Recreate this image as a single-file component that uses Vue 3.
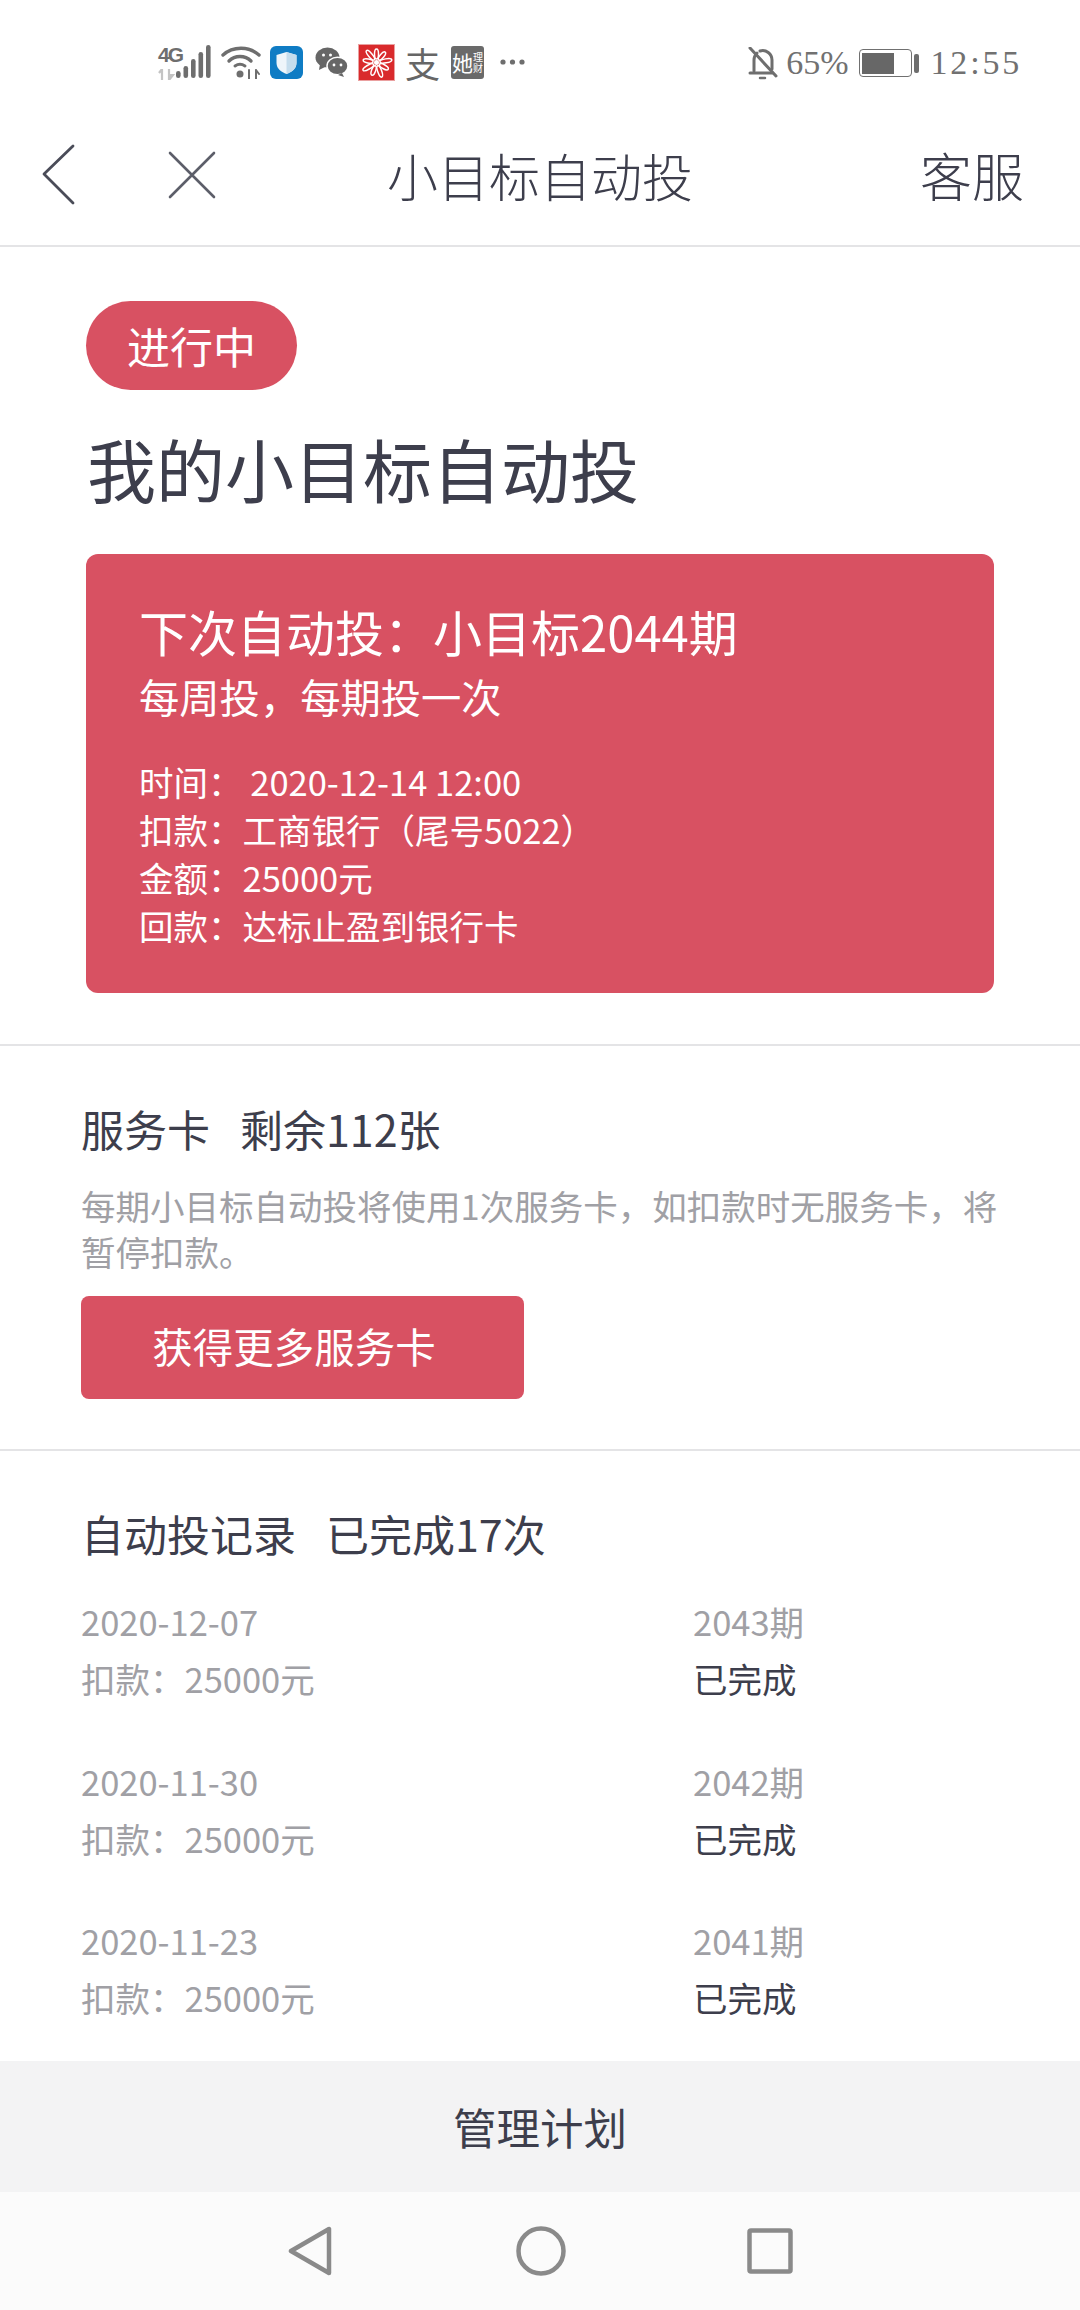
<template>
  <div class="page">
    <div class="status-bar">
      <div class="status-left">
        <div class="net">
          <span class="net-4g">4G</span>
          <svg class="net-arrows" width="17" height="11" viewBox="0 0 17 11"><path d="M4 0v11M1 4l3-4M11 0v11M11 11l4-5h-4z" stroke="#c4c4c4" stroke-width="2.200" fill="#c4c4c4"/></svg>
        </div>
        <svg class="signal" width="35" height="34" viewBox="0 0 35 34" fill="#6e6e6e">
          <rect x="0" y="26" width="4.600" height="7" rx="2.300"/>
          <rect x="7.500" y="21" width="4.600" height="12" rx="2.300"/>
          <rect x="15" y="14" width="4.600" height="19" rx="2.300"/>
          <rect x="22.500" y="7" width="4.600" height="26" rx="2.300"/>
          <rect x="30" y="0" width="4.600" height="33" rx="2.300"/>
        </svg>
        <svg class="wifi" width="40" height="33" viewBox="0 0 40 33" fill="none" stroke="#6e6e6e" stroke-width="3.400" stroke-linecap="round">
          <path d="M2 9C12 0 28 0 38 9"/>
          <path d="M8 15C14 9 24 9 30 15"/>
          <path d="M14 20C17 18 21 18 24 20" stroke-width="3"/>
          <circle cx="19" cy="28" r="3.500" fill="#6e6e6e" stroke="none"/>
          <path d="M28 24v9M35 24v9M35 24l3 4" stroke-width="2"/>
        </svg>
        <svg class="shield" width="33" height="33" viewBox="0 0 33 33">
          <rect width="33" height="33" rx="6" fill="#0f7cc4"/>
          <path d="M16.500 6l10 3v8c0 6-5 9-10 11C11.500 26 6.500 23 6.500 17V9z" fill="#eef5fa"/>
          <path d="M16.500 6l10 3v8c0 6-5 9-10 11z" fill="#c5dded"/>
        </svg>
        <svg class="wechat" width="33" height="30" viewBox="0 0 33 30" fill="#666">
          <ellipse cx="12.500" cy="10.500" rx="12" ry="10"/>
          <path d="M5 17l-1 6 6-3z"/>
          <ellipse cx="22.500" cy="19" rx="10.500" ry="8.800" stroke="#fff" stroke-width="1.500"/>
          <path d="M27 26l2 4-6-2z"/>
          <circle cx="8.500" cy="8" r="1.500" fill="#fff"/>
          <circle cx="15.500" cy="8" r="1.500" fill="#fff"/>
          <circle cx="19" cy="18" r="1.400" fill="#fff"/>
          <circle cx="26" cy="18" r="1.400" fill="#fff"/>
        </svg>
        <svg class="flower" width="37" height="37" viewBox="0 0 37 37">
          <rect x="0.500" y="0.500" width="36" height="36" fill="#d92a2c" stroke="#eaa0a0"/>
          <g fill="none" stroke="#fff" stroke-width="1.500" stroke-linecap="round">
            <ellipse cx="18.500" cy="10" rx="2" ry="5"/>
            <ellipse cx="18.500" cy="10" rx="2" ry="5" transform="rotate(40 18.500 18.500)"/>
            <ellipse cx="18.500" cy="9" rx="2" ry="6" transform="rotate(80 18.500 18.500)"/>
            <ellipse cx="18.500" cy="10" rx="2" ry="5" transform="rotate(120 18.500 18.500)"/>
            <ellipse cx="18.500" cy="9" rx="2" ry="6" transform="rotate(160 18.500 18.500)"/>
            <ellipse cx="18.500" cy="10" rx="2" ry="5" transform="rotate(200 18.500 18.500)"/>
            <ellipse cx="18.500" cy="9" rx="2" ry="6" transform="rotate(240 18.500 18.500)"/>
            <ellipse cx="18.500" cy="10" rx="2" ry="5" transform="rotate(280 18.500 18.500)"/>
            <ellipse cx="18.500" cy="9" rx="2" ry="6" transform="rotate(320 18.500 18.500)"/>
          </g>
          <circle cx="18.500" cy="18.500" r="2.500" fill="#fff"/>
        </svg>
        <span class="alipay">支</span>
        <div class="she">
          <span class="she-big">她</span>
          <span class="she-small">理<br />财</span>
        </div>
        <svg class="more" width="25" height="6" viewBox="0 0 25 6" fill="#6e6e6e">
          <circle cx="3" cy="3" r="2.600"/>
          <circle cx="12.500" cy="3" r="2.600"/>
          <circle cx="22" cy="3" r="2.600"/>
        </svg>
      </div>
      <div class="status-right">
        <svg class="bell" width="30" height="33" viewBox="0 0 30 33" fill="none" stroke="#6e6e6e" stroke-width="3" stroke-linecap="round" stroke-linejoin="round">
          <path d="M6 24V13C6 10 7 8 9 6M12 4C18 2 24 7 24 13V22"/>
          <path d="M2 26H24"/>
          <path d="M2 1L28 29"/>
          <path d="M12 31h5" stroke-width="2.500"/>
        </svg>
        <span class="pct">65%</span>
        <div class="battery">
          <div class="battery-box">
            <div class="battery-fill" :style="{ width: batteryLevel + '%' }"></div>
          </div>
          <div class="battery-cap"></div>
        </div>
        <span class="clock">12:55</span>
      </div>
    </div>

    <div class="nav">
      <div class="nav-left">
        <svg width="34" height="62" viewBox="0 0 34 62" fill="none" stroke="#4a4c58" stroke-width="2.800" stroke-linecap="round" stroke-linejoin="round">
          <path d="M31 2L2 30L31 59"/>
        </svg>
        <svg width="48" height="48" viewBox="0 0 48 48" fill="none" stroke="#5c5e69" stroke-width="2.600" stroke-linecap="round">
          <path d="M2 2L46 46M46 2L2 46"/>
        </svg>
      </div>
      <div class="nav-title">小目标自动投</div>
      <div class="nav-right">客服</div>
    </div>

    <div class="section plan">
      <span class="pill">进行中</span>
      <h1 class="plan-title">我的小目标自动投</h1>
      <div class="plan-card">
        <div class="card-head">下次自动投：小目标2044期</div>
        <div class="card-sub">每周投，每期投一次</div>
        <div class="card-lines">
          <div v-for="line in planLines" :key="line">{{ line }}</div>
        </div>
      </div>
    </div>

    <div class="section cards">
      <div class="sec-title"><span>服务卡</span><span>剩余112张</span></div>
      <p class="cards-desc">每期小目标自动投将使用1次服务卡，如扣款时无服务卡，将暂停扣款。</p>
      <button class="cards-btn">获得更多服务卡</button>
    </div>

    <div class="records">
      <div class="sec-title"><span>自动投记录</span><span>已完成17次</span></div>
      <div v-for="r in records" :key="r.date" class="record">
        <div class="rec-col">
          <div class="rec-muted">{{ r.date }}</div>
          <div class="rec-muted">扣款：25000元</div>
        </div>
        <div class="rec-col">
          <div class="rec-muted">{{ r.period }}</div>
          <div class="rec-done">已完成</div>
        </div>
      </div>
    </div>

    <div class="manage">管理计划</div>

    <div class="sys-nav">
      <svg width="44" height="50" viewBox="0 0 44 50" fill="none" stroke="#8a8a8a" stroke-width="4.500" stroke-linejoin="round">
        <path d="M41 3V47L3 25Z"/>
      </svg>
      <svg class="home" width="50" height="50" viewBox="0 0 50 50" fill="none" stroke="#8a8a8a" stroke-width="4.500">
        <circle cx="25" cy="25" r="22.500"/>
      </svg>
      <svg class="recent" width="46" height="46" viewBox="0 0 46 46" fill="none" stroke="#8a8a8a" stroke-width="4.500" stroke-linejoin="round">
        <rect x="2.500" y="2.500" width="41" height="41" rx="1.500"/>
      </svg>
    </div>
  </div>
</template>

<script setup>
const batteryLevel = 65

const planLines = [
  '时间： 2020-12-14 12:00',
  '扣款：工商银行（尾号5022）',
  '金额：25000元',
  '回款：达标止盈到银行卡'
]

const records = [
  { date: '2020-12-07', period: '2043期' },
  { date: '2020-11-30', period: '2042期' },
  { date: '2020-11-23', period: '2041期' }
]
</script>

<style>
html, body {
  margin: 0;
  background: #fff;
}
</style>

<style scoped>
.page {
  width: 1080px;
  height: 2310px;
  display: flex;
  flex-direction: column;
  overflow: hidden;
  background: #fff;
  font-family: "Noto Sans CJK SC", "Noto Sans", sans-serif;
  color: #3d3e4c;
}

.status-bar {
  height: 120px;
  flex-shrink: 0;
  display: flex;
  justify-content: space-between;
  align-items: flex-start;
  padding: 41px 58px 0 158px;
  box-sizing: border-box;
}

.status-left,
.status-right {
  display: flex;
  align-items: center;
  height: 42px;
}

.status-right {
  margin-top: 1px;
}

.net {
  width: 18px;
  display: flex;
  flex-direction: column;
  line-height: 1;
}

.net-4g {
  font-size: 21px;
  font-weight: 700;
  color: #6e6e6e;
  font-family: "Liberation Sans", sans-serif;
  letter-spacing: -2px;
}

.net-arrows {
  margin-top: 4px;
}

.wifi {
  margin-left: 10px;
}

.shield {
  margin-left: 9px;
  flex-shrink: 0;
}

.wechat {
  margin-left: 12px;
  flex-shrink: 0;
}

.flower {
  margin-left: 10px;
  flex-shrink: 0;
}

.alipay {
  margin-left: 10px;
  font-size: 35px;
  color: #666;
  line-height: 1;
}

.she {
  margin-left: 11px;
  width: 33px;
  height: 33px;
  border-radius: 3px;
  background: #6a6a6a;
  color: #fff;
  display: flex;
  align-items: center;
  justify-content: center;
}

.she-big {
  font-size: 21px;
  line-height: 1;
}

.she-small {
  font-size: 10px;
  line-height: 11px;
}

.more {
  margin-left: 16px;
}

.bell {
  margin-right: 8px;
}

.pct,
.clock {
  font-family: "Liberation Serif", serif;
  font-size: 34px;
  color: #717171;
}

.battery {
  display: flex;
  align-items: center;
  margin-left: 10px;
}

.battery-box {
  width: 48.500px;
  height: 21px;
  border: 1.500px solid #707070;
  border-radius: 4px;
  padding: 2.500px 0 2.500px 2.500px;
}

.battery-fill {
  height: 100%;
  background: #676767;
}

.battery-cap {
  width: 5px;
  height: 19px;
  margin-left: 2px;
  background: #6e6e6e;
  border-radius: 2px;
}

.clock {
  margin-left: 12px;
  letter-spacing: 2.800px;
}

.nav {
  height: 109px;
  flex-shrink: 0;
  display: flex;
  align-items: center;
  justify-content: space-between;
  padding: 0 56px 16px 42px;
  border-bottom: 2px solid #e4e4e6;
  position: relative;
}

.nav-left {
  display: flex;
  align-items: center;
  gap: 92px;
}

.nav-title {
  position: absolute;
  left: 0;
  right: 0;
  text-align: center;
  font-size: 51px;
  font-weight: 300;
}

.nav-right {
  font-size: 52px;
  font-weight: 300;
}

.section {
  border-bottom: 2px solid #e4e4e6;
}

.plan {
  padding: 54px 86px 51px;
}

.pill {
  display: inline-block;
  width: 211px;
  height: 89px;
  line-height: 89px;
  text-align: center;
  border-radius: 45px;
  background: #d85162;
  color: #fff;
  font-size: 43px;
}

.plan-title {
  margin: 28px 0 0 1px;
  font-size: 69px;
  font-weight: 400;
  line-height: 100px;
}

.plan-card {
  margin-top: 36px;
  width: 908px;
  height: 439px;
  padding: 41px 53px 0;
  box-sizing: border-box;
  border-radius: 12px;
  background: #d85162;
  color: #fff;
}

.card-head {
  font-size: 49px;
  line-height: 72px;
}

.card-sub {
  font-size: 40.300px;
  line-height: 58px;
}

.card-lines {
  margin-top: 32px;
  font-size: 34.500px;
  line-height: 48px;
}

.cards {
  padding: 49px 70px 50px 81px;
}

.sec-title {
  display: flex;
  gap: 30px;
  font-size: 43px;
  line-height: 66px;
}

.cards-desc {
  margin: 21px 0 0;
  font-size: 34.500px;
  line-height: 46px;
  color: #a0a0a5;
}

.cards-btn {
  display: block;
  margin-top: 22px;
  width: 443px;
  height: 103px;
  padding: 0 17px 4px 0;
  border: none;
  border-radius: 8px;
  background: #d85162;
  color: #fff;
  font-family: inherit;
  font-size: 40.500px;
}

.records {
  flex: 1;
  min-height: 0;
  overflow: hidden;
  padding: 49px 81px 0;
}

.record {
  display: flex;
  margin-top: 27px;
  margin-bottom: 45.500px;
  font-size: 34.500px;
  line-height: 57px;
}

.rec-col:first-child {
  width: 612px;
}

.rec-muted {
  color: #a0a0a5;
}

.rec-done {
  color: #3d3e4c;
}

.manage {
  height: 131px;
  flex-shrink: 0;
  display: flex;
  align-items: center;
  justify-content: center;
  background: #f3f3f4;
  font-size: 43.500px;
}

.sys-nav {
  height: 118px;
  flex-shrink: 0;
  display: flex;
  align-items: center;
  justify-content: center;
  background: #fbfbfb;
}

.home {
  margin-left: 184px;
}

.recent {
  margin-left: 181px;
}
</style>
